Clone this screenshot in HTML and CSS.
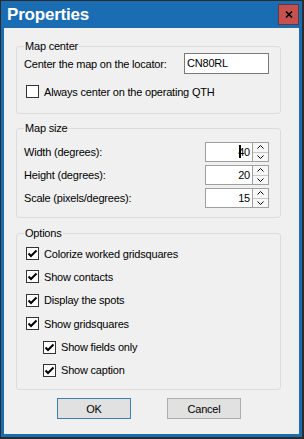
FILE: index.html
```html
<!DOCTYPE html>
<html>
<head>
<meta charset="utf-8">
<link rel="stylesheet" href="styles.css">
</head>
<body>
<div class="window">
  <div class="titlebar">
    <span class="title">Properties</span>
    <span class="close"><svg width="8" height="7" viewBox="0 0 8 7"><path d="M1 0.5 L7 6.5 M7 0.5 L1 6.5" stroke="#000" stroke-width="1.6"/></svg></span>
  </div>
  <div class="client">
    <fieldset class="group g1">
      <legend>Map center</legend>
      <div class="row">
        <span>Center the map on the locator:</span>
        <span class="textbox">CN80RL</span>
      </div>
      <div class="check"><span class="box"></span><span>Always center on the operating QTH</span></div>
    </fieldset>

    <fieldset class="group g2">
      <legend>Map size</legend>
      <div class="row">
        <span>Width (degrees):</span>
        <span class="spin"><span class="field">40<i class="caret"></i></span><span class="btns"><span class="up"><svg width="7" height="4" viewBox="0 0 7 4"><path d="M0.5 3.5 L3.5 0.5 L6.5 3.5" fill="none" stroke="#000" stroke-width="1"/></svg></span><span class="dn"><svg width="7" height="4" viewBox="0 0 7 4"><path d="M0.5 0.5 L3.5 3.5 L6.5 0.5" fill="none" stroke="#000" stroke-width="1"/></svg></span></span></span>
      </div>
      <div class="row">
        <span>Height (degrees):</span>
        <span class="spin"><span class="field">20</span><span class="btns"><span class="up"><svg width="7" height="4" viewBox="0 0 7 4"><path d="M0.5 3.5 L3.5 0.5 L6.5 3.5" fill="none" stroke="#000" stroke-width="1"/></svg></span><span class="dn"><svg width="7" height="4" viewBox="0 0 7 4"><path d="M0.5 0.5 L3.5 3.5 L6.5 0.5" fill="none" stroke="#000" stroke-width="1"/></svg></span></span></span>
      </div>
      <div class="row">
        <span>Scale (pixels/degrees):</span>
        <span class="spin"><span class="field">15</span><span class="btns"><span class="up"><svg width="7" height="4" viewBox="0 0 7 4"><path d="M0.5 3.5 L3.5 0.5 L6.5 3.5" fill="none" stroke="#000" stroke-width="1"/></svg></span><span class="dn"><svg width="7" height="4" viewBox="0 0 7 4"><path d="M0.5 0.5 L3.5 3.5 L6.5 0.5" fill="none" stroke="#000" stroke-width="1"/></svg></span></span></span>
      </div>
    </fieldset>

    <fieldset class="group g3">
      <legend>Options</legend>
      <div class="check"><span class="box on"><svg width="11" height="11" viewBox="0 0 11 11"><path d="M1.5 5.5 L4 8 L9.5 2.5" fill="none" stroke="#000" stroke-width="2"/></svg></span><span>Colorize worked gridsquares</span></div>
      <div class="check"><span class="box on"><svg width="11" height="11" viewBox="0 0 11 11"><path d="M1.5 5.5 L4 8 L9.5 2.5" fill="none" stroke="#000" stroke-width="2"/></svg></span><span>Show contacts</span></div>
      <div class="check"><span class="box on"><svg width="11" height="11" viewBox="0 0 11 11"><path d="M1.5 5.5 L4 8 L9.5 2.5" fill="none" stroke="#000" stroke-width="2"/></svg></span><span>Display the spots</span></div>
      <div class="check"><span class="box on"><svg width="11" height="11" viewBox="0 0 11 11"><path d="M1.5 5.5 L4 8 L9.5 2.5" fill="none" stroke="#000" stroke-width="2"/></svg></span><span>Show gridsquares</span></div>
      <div class="check sub"><span class="box on"><svg width="11" height="11" viewBox="0 0 11 11"><path d="M1.5 5.5 L4 8 L9.5 2.5" fill="none" stroke="#000" stroke-width="2"/></svg></span><span>Show fields only</span></div>
      <div class="check sub"><span class="box on"><svg width="11" height="11" viewBox="0 0 11 11"><path d="M1.5 5.5 L4 8 L9.5 2.5" fill="none" stroke="#000" stroke-width="2"/></svg></span><span>Show caption</span></div>
    </fieldset>

    <div class="buttons">
      <span class="btn default">OK</span>
      <span class="btn">Cancel</span>
    </div>
  </div>
</div>
</body>
</html>
```

FILE: styles.css
```css
* { box-sizing: border-box; }
html, body { margin: 0; padding: 0; }
body {
  width: 304px;
  height: 439px;
  font-family: "Liberation Sans", Arial, sans-serif;
  font-size: 11px;
  letter-spacing: -0.2px;
  color: #000;
}
.window {
  width: 304px;
  height: 439px;
  background: #1a6db3;
  border: 1px solid #2b2b2b;
  border-right-width: 2px;
  border-bottom-width: 2px;
  display: flex;
  flex-direction: column;
}
.titlebar {
  height: 27px;
  display: flex;
  justify-content: space-between;
  align-items: flex-start;
  padding: 0 3px 0 6px;
}
.title {
  color: #fff;
  font-family: "Liberation Sans", Arial, sans-serif;
  font-weight: bold;
  font-size: 17px;
  line-height: 27px;
  letter-spacing: -0.2px;
}
.close {
  margin-top: 3px;
  width: 21px;
  height: 21px;
  background: #c75050;
  border: 1px solid #5e3a3a;
  display: flex;
  align-items: center;
  justify-content: center;
}
.client {
  flex: 1;
  margin: 0 3px 3px 3px;
  background: #f0f0f0;
  padding: 12px 0 0 12px;
  display: flex;
  flex-direction: column;
}
.group {
  width: 265px;
  margin: 0;
  border: 1px solid #dcdcdc;
  border-radius: 3px;
  padding: 0 11px 0 7px;
  display: flex;
  flex-direction: column;
}
.group legend {
  padding: 0 1px;
  margin-left: 0;
  line-height: 13px;
  height: 13px;
}
.row {
  display: flex;
  justify-content: space-between;
  align-items: center;
}
.g1 { height: 74px; }
.g1 .row { height: 21px; }
.textbox {
  width: 85px;
  height: 21px;
  background: #fff;
  border: 1px solid #7a7a7a;
  padding: 0 2px;
  line-height: 19px;
}
.check {
  display: flex;
  align-items: center;
  height: 13px;
  gap: 5px;
  padding-left: 2px;
}
.g1 .check { margin-top: 11px; }
.box {
  width: 13px;
  height: 13px;
  border: 1px solid #333;
  background: #fff;
  display: flex;
  align-items: center;
  justify-content: center;
}
.g2 {
  margin-top: 8px;
  height: 96px;
  padding-top: 7px;
  gap: 3px;
}
.g2 .row { height: 20px; }
.spin {
  display: flex;
  width: 64px;
  height: 20px;
}
.field {
  position: relative;
  flex: 1;
  background: #fff;
  border: 1px solid #a0a0a0;
  text-align: right;
  padding-right: 2px;
  line-height: 18px;
}
.caret {
  position: absolute;
  left: 33px;
  top: 2px;
  width: 2px;
  height: 13px;
  background: #000;
}
.btns {
  width: 16px;
  display: flex;
  flex-direction: column;
  border: 1px solid #a0a0a0;
  border-left: none;
}
.btns span {
  flex: 1;
  display: flex;
  align-items: center;
  justify-content: center;
  background: #f7f7f7;
}
.btns .up { border-bottom: 1px solid #c8c8c8; }
.g3 {
  margin-top: 9px;
  height: 163px;
  padding-top: 7px;
  gap: 10.4px;
}
.check.sub { padding-left: 19px; }
.buttons {
  margin-top: 8px;
  display: flex;
  gap: 36px;
  padding-left: 41px;
}
.btn {
  width: 74px;
  height: 21px;
  background: #e1e1e1;
  border: 1px solid #adadad;
  display: flex;
  align-items: center;
  justify-content: center;
}
.btn.default { border-color: #3c7fb1; }
```
